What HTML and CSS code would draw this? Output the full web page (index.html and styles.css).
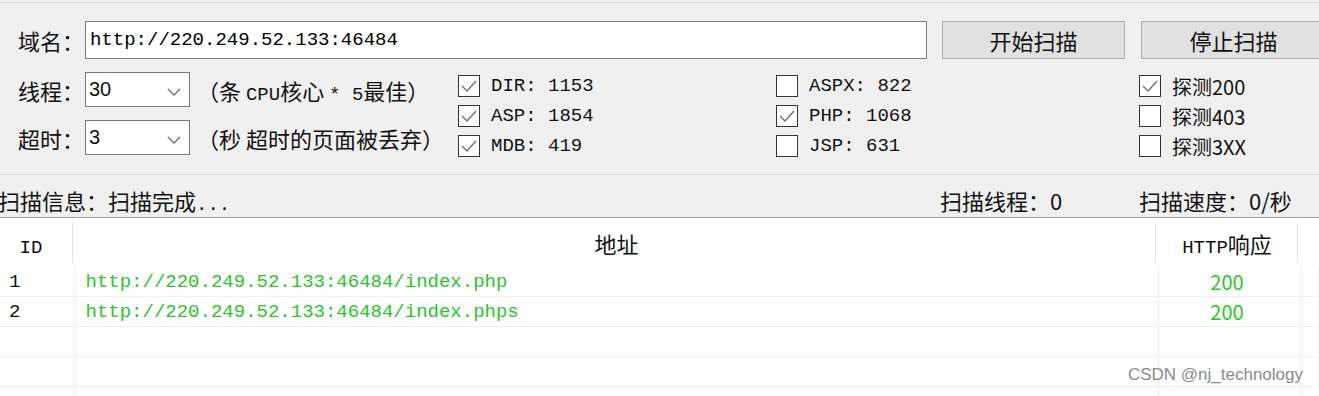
FILE: index.html
```html
<!DOCTYPE html>
<html lang="zh-CN">
  <head>
    <meta charset="UTF-8">
    <title>目录扫描</title>
    <link rel="stylesheet" href="styles.css">
  </head>
  <body>
    <div class="app">
      <section class="params">
        <div class="row-domain">
          <label class="lbl">域名：</label>
          <input class="domain" type="text" value="http://220.249.52.133:46484" readonly>
          <button class="btn">开始扫描</button>
          <button class="btn btn-stop">停止扫描</button>
        </div>

        <div class="row-options">
          <div class="opts">
            <div class="opt-row">
              <label class="lbl">线程：</label>
              <div class="select">
                <span>30</span>
                <svg width="14" height="8" viewBox="0 0 14 8"><polyline points="1,1 7,7 13,1" fill="none" stroke="#6a6a6a" stroke-width="1.3"/></svg>
              </div>
              <span class="note">（条 <span class="mono">CPU</span>核心 <span class="mono">* 5</span>最佳）</span>
            </div>
            <div class="opt-row">
              <label class="lbl">超时：</label>
              <div class="select">
                <span>3</span>
                <svg width="14" height="8" viewBox="0 0 14 8"><polyline points="1,1 7,7 13,1" fill="none" stroke="#6a6a6a" stroke-width="1.3"/></svg>
              </div>
              <span class="note">（秒 超时的页面被丢弃）</span>
            </div>
          </div>

          <!-- 字典类型 -->
          <div class="checks col-a">
            <div class="chk"><span class="box"><svg width="20" height="20" viewBox="0 0 20 20"><polyline points="3,10 8,15 17,5" fill="none" stroke="#707070" stroke-width="1.4"/></svg></span>DIR: 1153</div>
            <div class="chk"><span class="box"><svg width="20" height="20" viewBox="0 0 20 20"><polyline points="3,10 8,15 17,5" fill="none" stroke="#707070" stroke-width="1.4"/></svg></span>ASP: 1854</div>
            <div class="chk"><span class="box"><svg width="20" height="20" viewBox="0 0 20 20"><polyline points="3,10 8,15 17,5" fill="none" stroke="#707070" stroke-width="1.4"/></svg></span>MDB: 419</div>
          </div>
          <div class="checks col-b">
            <div class="chk"><span class="box"></span>ASPX: 822</div>
            <div class="chk"><span class="box"><svg width="20" height="20" viewBox="0 0 20 20"><polyline points="3,10 8,15 17,5" fill="none" stroke="#707070" stroke-width="1.4"/></svg></span>PHP: 1068</div>
            <div class="chk"><span class="box"></span>JSP: 631</div>
          </div>

          <!-- 状态码 -->
          <div class="checks col-c">
            <div class="chk chk-cn"><span class="box"><svg width="20" height="20" viewBox="0 0 20 20"><polyline points="3,10 8,15 17,5" fill="none" stroke="#707070" stroke-width="1.4"/></svg></span>探测200</div>
            <div class="chk chk-cn"><span class="box"></span>探测403</div>
            <div class="chk chk-cn"><span class="box"></span>探测3XX</div>
          </div>
        </div>
      </section>

      <div class="status">
        <span class="status-info">扫描信息：扫描完成<span class="dots">...</span></span>
        <span class="status-threads">扫描线程：0</span>
        <span class="status-speed">扫描速度：0/秒</span>
      </div>

      <div class="list">
        <table class="table">
          <colgroup>
            <col class="c-id">
            <col class="c-url">
            <col class="c-code">
            <col class="c-rest">
          </colgroup>
          <thead>
            <tr>
              <th class="sep th-id"><span class="mono">ID</span></th>
              <th class="sep">地址</th>
              <th class="sep th-code"><span class="mono">HTTP</span>响应</th>
              <th></th>
            </tr>
          </thead>
          <tbody>
            <tr>
              <td class="id">1</td>
              <td class="url">http://220.249.52.133:46484/index.php</td>
              <td class="code">200</td>
              <td></td>
            </tr>
            <tr>
              <td class="id">2</td>
              <td class="url">http://220.249.52.133:46484/index.phps</td>
              <td class="code">200</td>
              <td></td>
            </tr>
            <tr><td></td><td></td><td></td><td></td></tr>
            <tr><td></td><td></td><td></td><td></td></tr>
            <tr><td></td><td></td><td></td><td></td></tr>
          </tbody>
        </table>
      </div>

      <div class="watermark">CSDN @nj_technology</div>
    </div>
  </body>
</html>
```

FILE: styles.css
```css
body {
  margin: 0;
  background: #f0f0f0;
  font-family: "Noto Sans CJK SC", sans-serif;
  color: #111;
  overflow: hidden;
}

.app {
  width: 1319px;
  height: 396px;
  position: relative;
  overflow: hidden;
}

.mono {
  font-family: "Liberation Mono", "Noto Sans CJK SC", monospace;
  font-size: 19px;
}

/* 参数区 */
.params {
  margin-top: 2px;
  height: 173px;
  box-sizing: border-box;
  border-top: 1px solid #dcdcdc;
  border-bottom: 1px solid #dcdcdc;
  padding: 18px 0 0 18px;
}

.row-domain {
  display: flex;
  align-items: center;
  height: 38px;
}

.lbl {
  flex: none;
  width: 67px;
  font-size: 22px;
  line-height: 1;
}

.domain {
  flex: none;
  width: 842px;
  height: 38px;
  margin: 0;
  box-sizing: border-box;
  border: 1px solid #7a7a7a;
  padding: 0 4px;
  background: #fff;
  font: 19px "Liberation Mono", monospace;
  color: #000;
  outline: none;
}

.btn {
  flex: none;
  width: 183px;
  height: 38px;
  margin: 0 0 0 15px;
  padding: 0;
  border: 1px solid #adadad;
  background: #e1e1e1;
  font: 22px "Noto Sans CJK SC", sans-serif;
  color: #111;
}

.btn-stop {
  width: 185px;
  margin-left: 16px;
}

.row-options {
  display: flex;
  margin-top: 10px;
}

.opts {
  flex: none;
  width: 440px;
  padding-top: 3px;
  display: flex;
  flex-direction: column;
  gap: 13px;
}

.opt-row {
  display: flex;
  align-items: center;
  height: 35px;
}

.select {
  flex: none;
  width: 105px;
  height: 35px;
  box-sizing: border-box;
  border: 1px solid #7a7a7a;
  background: #fff;
  display: flex;
  align-items: center;
  justify-content: space-between;
  padding: 0 8px 0 3px;
  font: 20px "Liberation Sans", sans-serif;
}

.select svg {
  margin-top: 4px;
}

.note {
  margin-left: 7px;
  font-size: 22px;
  white-space: nowrap;
}

.checks {
  flex: none;
  display: flex;
  flex-direction: column;
  margin-top: 2px;
}

.col-a {
  width: 318px;
}

.col-b {
  width: 363px;
}

.chk {
  display: flex;
  align-items: center;
  gap: 11px;
  height: 30px;
  font: 19px "Liberation Mono", monospace;
  white-space: nowrap;
}

.chk-cn {
  font: 20px "Noto Sans CJK SC", sans-serif;
}

.box {
  flex: none;
  width: 22px;
  height: 22px;
  box-sizing: border-box;
  border: 1px solid #333;
  background: #fff;
}

.box svg {
  display: block;
}

/* 状态栏 */
.status {
  height: 43px;
  box-sizing: border-box;
  border-bottom: 1px solid #a0a0a0;
  padding-top: 8px;
  display: flex;
  align-items: center;
  font-size: 22px;
  white-space: nowrap;
}

.status-info {
  flex: 1;
  margin-left: -2px;
}

.dots {
  font-family: "Liberation Mono", monospace;
  font-size: 19px;
}

.status-threads {
  width: 199px;
}

.status-speed {
  width: 180px;
}

/* 结果列表 */
.list {
  background: #fff;
  height: 178px;
}

.table {
  width: 1319px;
  table-layout: fixed;
  border-collapse: collapse;
}

.c-id {
  width: 75px;
}

.c-url {
  width: 1083px;
}

.c-code {
  width: 142px;
}

.table th {
  height: 49px;
  padding: 0;
  font-weight: normal;
  font-size: 22px;
  text-align: center;
}

.table th.sep {
  background: linear-gradient(#e3e3e3, #e3e3e3) no-repeat right 2px top 4px / 1px calc(100% - 8px);
}

.table th.th-id {
  padding-right: 13px;
}

.table th.th-code {
  padding-right: 4px;
}

.table td {
  height: 29px;
  padding: 0;
  border-bottom: 1px solid #f0f0f0;
  border-right: 1px solid #f0f0f0;
  white-space: nowrap;
}

.id {
  padding-left: 9px !important;
  font: 19px "Liberation Mono", monospace;
}

.url {
  padding-left: 10px !important;
  font: 19px "Liberation Mono", monospace;
  color: #2cc42c;
}

.code {
  text-align: center;
  font: 20px "Noto Sans CJK SC", sans-serif;
  color: #2cc42c;
  padding-right: 4px !important;
}

.watermark {
  position: absolute;
  right: 16px;
  top: 365px;
  font: 17px "Liberation Sans", sans-serif;
  color: #8a8a8a;
}
```
